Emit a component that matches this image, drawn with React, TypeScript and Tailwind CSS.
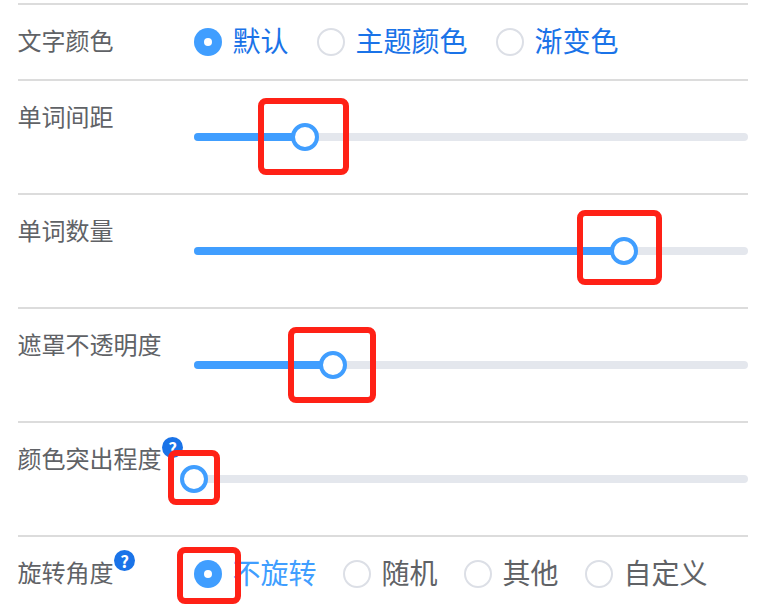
import React from "react";

const font = { fontFamily: '"Noto Sans CJK SC", "Noto Sans", sans-serif' };

const Radio = ({ label, checked, tone }: { label: string; checked?: boolean; tone: string }) => (
  <label className="flex items-center gap-[10.5px]">
    {checked ? (
      <span className="flex h-7 w-7 items-center justify-center rounded-full bg-[#409eff]">
        <span className="h-2 w-2 rounded-full bg-white" />
      </span>
    ) : (
      <span className="h-7 w-7 rounded-full border-2 border-[#dcdfe6] bg-white" />
    )}
    <span className={`mb-[4px] mr-[0.5px] text-[28px] leading-[36px] ${tone}`}>{label}</span>
  </label>
);

const Help = ({ className }: { className: string }) => (
  <span
    className={`absolute flex h-[21px] w-[21px] items-center justify-center rounded-full bg-[#1a73e8] text-[17px] font-bold leading-none text-white ${className}`}
  >
    ?
  </span>
);

const Slider = ({ percent }: { percent: number }) => (
  <div className="relative mt-[52px] h-2 w-[554px] rounded-full bg-[#e4e7ed]">
    <div className="h-2 rounded-full bg-[#409eff]" style={{ width: `${percent}%` }} />
    <div
      className="absolute top-[-10px] ml-[-14px] h-7 w-7 rounded-full border-4 border-[#409eff] bg-white"
      style={{ left: `${percent}%` }}
    />
  </div>
);

const SliderRow = ({ label, percent, help }: { label: string; percent: number; help?: boolean }) => (
  <div className="flex h-[114px] border-t-2 border-[#dcdcdc]">
    <div className="relative w-[176px] pt-[19px] text-2xl leading-[32px] text-[#606266]">
      <span className="ml-[-0.5px]">{label}</span>
      {help && <Help className="left-[144px] top-[14px]" />}
    </div>
    <Slider percent={percent} />
  </div>
);

const Marker = ({ className }: { className: string }) => (
  <div className={`absolute rounded-[8px] border-[6px] border-[#ff2116] ${className}`} />
);

export default function App() {
  return (
    <div className="relative h-[611px] w-[765px] overflow-hidden bg-white pl-[18px] pr-[17px] pt-[3px]" style={font}>
      <div className="flex h-[76px] items-center border-t-2 border-[#dcdcdc]">
        <div className="mb-[4px] w-[176px] text-2xl leading-[32px] text-[#606266]">
          <span className="ml-[-0.5px]">文字颜色</span>
        </div>
        <div className="flex gap-[28px]">
          <Radio label="默认" checked tone="text-[#1a73e8]" />
          <Radio label="主题颜色" tone="text-[#1a73e8]" />
          <Radio label="渐变色" tone="text-[#1a73e8]" />
        </div>
      </div>
      <SliderRow label="单词间距" percent={20} />
      <SliderRow label="单词数量" percent={77.6} />
      <SliderRow label="遮罩不透明度" percent={25} />
      <SliderRow label="颜色突出程度" percent={0} help />
      <div className="flex h-[76px] items-center border-t-2 border-[#dcdcdc]">
        <div className="relative mb-[4px] w-[176px] text-2xl leading-[32px] text-[#606266]">
          <span className="ml-[-0.5px]">旋转角度</span>
          <Help className="left-[96px] top-[-6px]" />
        </div>
        <div className="flex gap-[26px]">
          <Radio label="不旋转" checked tone="text-[#409eff]" />
          <Radio label="随机" tone="text-[#606266]" />
          <Radio label="其他" tone="text-[#606266]" />
          <Radio label="自定义" tone="text-[#606266]" />
        </div>
      </div>

      <Marker className="left-[258px] top-[98px] h-[77px] w-[91px]" />
      <Marker className="left-[577px] top-[210px] h-[75px] w-[85px]" />
      <Marker className="left-[288px] top-[327px] h-[76px] w-[88px]" />
      <Marker className="left-[168px] top-[450px] h-[55px] w-[52px]" />
      <Marker className="left-[177px] top-[547px] h-[57px] w-[64px]" />
    </div>
  );
}
